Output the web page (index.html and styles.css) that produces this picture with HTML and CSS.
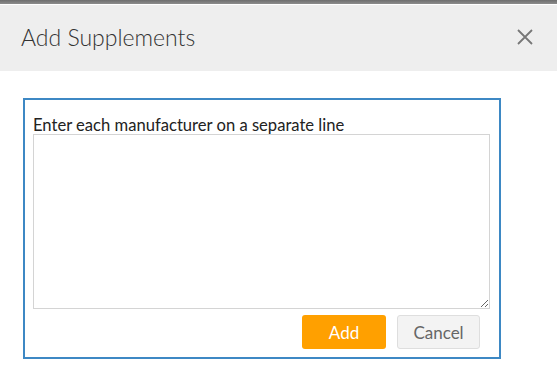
FILE: index.html
```html
<!DOCTYPE html>
<html>
<head>
<meta charset="utf-8">
<link rel="stylesheet" href="styles.css">
</head>
<body>
<div class="topbar"></div>
<div class="header">
  <h1 class="title">Add Supplements</h1>
  <span class="close" aria-label="Close">
    <svg width="16" height="16" viewBox="0 0 16 16"><path d="M1 1 L15 15 M15 1 L1 15" stroke="#777" stroke-width="1.8" fill="none"/></svg>
  </span>
</div>
<div class="content">
  <div class="box">
    <label class="label" for="m">Enter each manufacturer on a separate line</label>
    <textarea id="m" class="area"></textarea>
    <div class="actions">
      <button class="btn btn-add">Add</button>
      <button class="btn btn-cancel">Cancel</button>
    </div>
  </div>
</div>
</body>
</html>
```
FILE: styles.css
```css
html, body {
  margin: 0;
  padding: 0;
  background: #fff;
  font-family: Lato, "Liberation Sans", sans-serif;
}
.topbar {
  height: 4px;
  background: linear-gradient(#6e6e6e, #8c8c8c);
}
.header {
  margin-top: 1px;
  height: 66px;
  background: #eeeeee;
  display: flex;
  align-items: center;
  justify-content: space-between;
  padding: 0 24px 0 21px;
}
.title {
  margin: 0;
  font-size: 23px;
  font-weight: 300;
  color: #333;
  line-height: 1;
  padding-bottom: 2px;
}
.close {
  display: flex;
  width: 16px;
  height: 16px;
  margin-bottom: 2px;
}
.content {
  padding: 27px 0 0 23px;
}
.box {
  width: 474px;
  height: 257px;
  border: 2px solid #3d88c4;
  padding: 0;
  display: flex;
  flex-direction: column;
  box-sizing: content-box;
}
.label {
  display: block;
  margin: 16px 9px 0 8px;
  font-size: 16.6px;
  line-height: 18px;
  color: #222;
}
.area {
  display: block;
  margin: 0 9px 0 8px;
  width: 457px;
  height: 175px;
  box-sizing: border-box;
  border: 1px solid #d4d4d4;
  padding: 4px;
  font-family: Lato, sans-serif;
  font-size: 14px;
  outline: none;
}
.actions {
  display: flex;
  justify-content: flex-end;
  gap: 11px;
  margin: 6px 19px 0 0;
}
.btn {
  height: 34px;
  border-radius: 3px;
  font-family: Lato, sans-serif;
  font-size: 17px;
  padding: 0;
  box-sizing: border-box;
}
.btn-add {
  width: 84px;
  background: #ffa000;
  border: none;
  color: #fff;
}
.btn-cancel {
  width: 83px;
  background: #f3f3f3;
  border: 1px solid #dedede;
  color: #666;
}
```
